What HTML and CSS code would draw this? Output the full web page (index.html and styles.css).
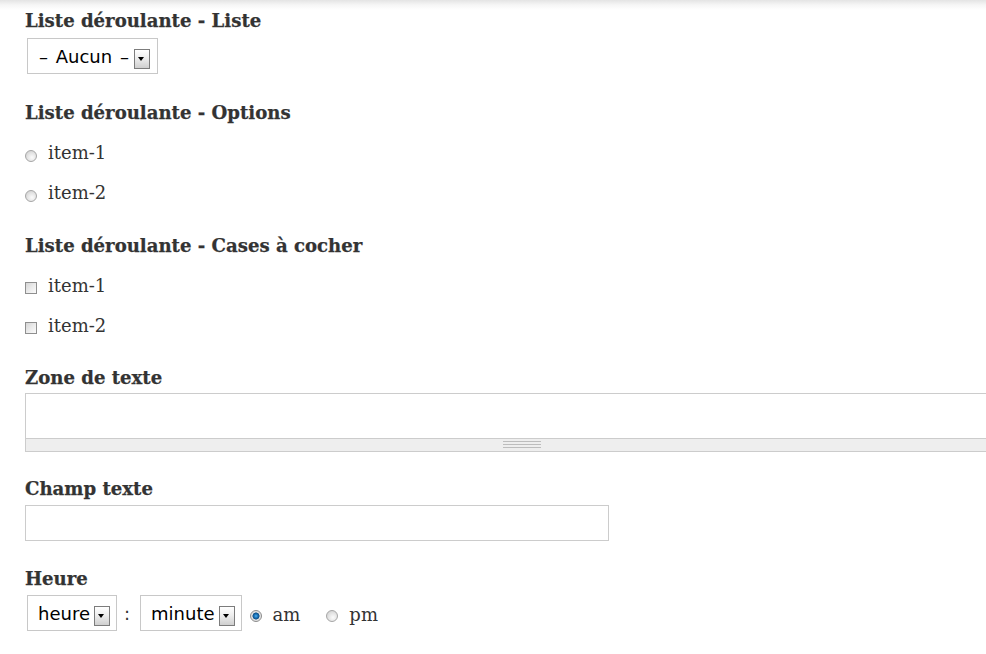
FILE: index.html
```html
<!DOCTYPE html>
<html lang="fr">
<head>
<meta charset="utf-8">
<title>Formulaire</title>
<link rel="stylesheet" href="styles.css">
</head>
<body>
<form class="form">
  <div class="field field--select">
    <span class="field-label">Liste déroulante - Liste</span>
    <span class="select"><span class="select-value">– Aucun –</span><span class="select-arrow"></span></span>
  </div>

  <div class="field field--options">
    <span class="field-label">Liste déroulante - Options</span>
    <div class="options">
      <label class="option"><span class="radio"></span><span>item-1</span></label>
      <label class="option"><span class="radio"></span><span>item-2</span></label>
    </div>
  </div>

  <div class="field field--checks">
    <span class="field-label">Liste déroulante - Cases à cocher</span>
    <div class="options">
      <label class="option"><span class="checkbox"></span><span>item-1</span></label>
      <label class="option"><span class="checkbox"></span><span>item-2</span></label>
    </div>
  </div>

  <div class="field field--textarea">
    <span class="field-label">Zone de texte</span>
    <div class="textarea-wrap">
      <textarea class="textarea"></textarea>
      <div class="grippie"><span class="grippie-handle"></span></div>
    </div>
  </div>

  <div class="field field--text">
    <span class="field-label">Champ texte</span>
    <input class="text-input" type="text">
  </div>

  <div class="field field--time">
    <span class="field-label">Heure</span>
    <div class="time">
      <span class="select"><span class="select-value">heure</span><span class="select-arrow"></span></span>
      <span class="time-sep">:</span>
      <span class="select"><span class="select-value">minute</span><span class="select-arrow"></span></span>
      <label class="option option--inline option--am"><span class="radio radio--checked"></span><span>am</span></label>
      <label class="option option--inline option--pm"><span class="radio"></span><span>pm</span></label>
    </div>
  </div>
</form>
</body>
</html>
```

FILE: styles.css
```css
html, body {
  margin: 0;
  padding: 0;
}

body {
  background: linear-gradient(to bottom, #e4e4e4 0, #f6f6f6 5px, #ffffff 10px) no-repeat, #ffffff;
  font-family: "DejaVu Serif", serif;
  color: #333333;
  overflow: hidden;
  width: 986px;
  height: 654px;
}

.form {
  display: flex;
  flex-direction: column;
  padding: 10px 0 0 25px;
}

.field {
  display: flex;
  flex-direction: column;
  align-items: flex-start;
}

.field-label {
  font-weight: bold;
  font-size: 18.1px;
  line-height: 22px;
  color: #333333;
  -webkit-text-stroke: 0.25px #333333;
}

/* spacing between fields */
.field--options { margin-top: 28px; }
.field--checks { margin-top: 31px; }
.field--textarea { margin-top: 30px; }
.field--text { margin-top: 26px; }
.field--time { margin-top: 27px; }

/* select look-alike */
.select {
  display: inline-flex;
  align-items: center;
  gap: 4px;
  box-sizing: border-box;
  height: 36px;
  padding: 0 6px 0 10px;
  border: 1px solid #c8c8c8;
  background: #fff;
  font-family: "DejaVu Sans", sans-serif;
  font-size: 18px;
  color: #000;
  margin-left: 2px;
}

.field--select .select {
  margin-top: 6px;
  padding-left: 11px;
  padding-right: 7px;
  gap: 5px;
}

.field--select .select-value {
  word-spacing: 2px;
}

.select-arrow {
  position: relative;
  box-sizing: border-box;
  width: 16px;
  height: 20px;
  margin-top: 5px;
  border: 1px solid #7c7c7c;
  background: linear-gradient(to bottom, #ffffff 0%, #eeeeee 45%, #cfcfcf 100%);
}

.select-arrow::after {
  content: "";
  position: absolute;
  left: 3.5px;
  top: 7px;
  border-left: 3.5px solid transparent;
  border-right: 3.5px solid transparent;
  border-top: 4px solid #000;
}

/* radio / checkbox options */
.options {
  display: flex;
  flex-direction: column;
  gap: 18px;
  margin-top: 18px;
}

.option {
  display: flex;
  align-items: flex-start;
  gap: 11px;
  font-size: 18px;
  line-height: 22px;
  color: #333333;
}

.radio {
  box-sizing: border-box;
  width: 12px;
  height: 12px;
  margin-top: 8px;
  border-radius: 50%;
  border: 1px solid #a6a6a6;
  background: radial-gradient(circle at 60% 65%, #fbfbfb 0%, #e6e6e6 45%, #c9c9c9 100%);
}

.radio--checked {
  border-color: #8c8c8c;
  background: radial-gradient(circle at 50% 50%, #52b0ee 0, #1a73b8 1.8px, #0f4f86 3.2px, #dcdcdc 3.8px, #f3f3f3 100%);
}

.checkbox {
  box-sizing: border-box;
  width: 12px;
  height: 12px;
  margin-top: 7px;
  border: 1px solid #8f8f8f;
  background: linear-gradient(135deg, #d6d6d6 0%, #ececec 55%, #fafafa 100%);
}

/* textarea */
.textarea-wrap {
  margin-top: 4px;
  width: 994px;
}

.textarea {
  display: block;
  box-sizing: border-box;
  width: 994px;
  height: 46px;
  margin: 0;
  padding: 4px;
  border: 1px solid #cccccc;
  resize: none;
  background: #fff;
  outline: none;
}

.grippie {
  display: flex;
  justify-content: center;
  box-sizing: border-box;
  height: 13px;
  border: 1px solid #cccccc;
  border-top: none;
  background: #eeeeee;
}

.grippie-handle {
  width: 38px;
  height: 7px;
  margin-top: 2px;
  background-image: linear-gradient(to bottom, #bdbdbd 1px, transparent 1px);
  background-size: 100% 3px;
}

/* text input */
.text-input {
  box-sizing: border-box;
  width: 584px;
  height: 36px;
  margin: 5px 0 0 0;
  padding: 4px;
  border: 1px solid #cccccc;
  background: #fff;
  outline: none;
}

/* time */
.time {
  display: flex;
  align-items: center;
  margin-top: 5px;
}

.time-sep {
  font-family: "DejaVu Sans", sans-serif;
  font-size: 18px;
  color: #333;
  margin: 0 8px 0 7px;
}

.option--inline {
  align-items: center;
  font-size: 18px;
}

.option--inline .radio {
  margin-top: 6px;
}

.option--inline span:last-child {
  margin-top: 3px;
}

.option--am { margin-left: 8px; }
.option--pm { margin-left: 26px; }
```
